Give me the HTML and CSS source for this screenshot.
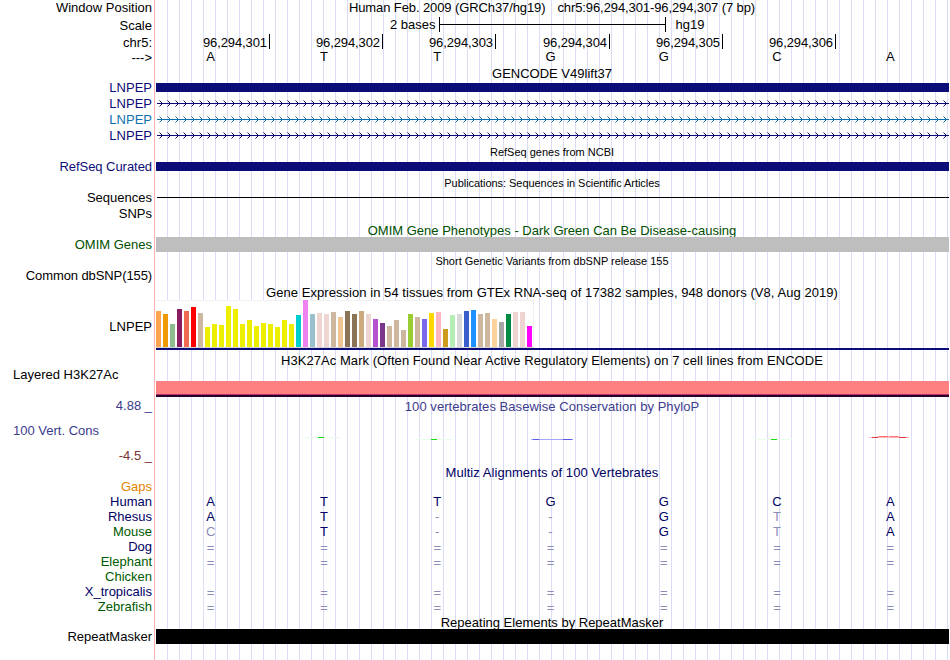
FILE: index.html
```html
<!DOCTYPE html>
<html lang="en">
<head>
<meta charset="utf-8">
<title>LNPEP chr5:96,294,301-96,294,307</title>
<link rel="stylesheet" href="styles.css">
</head>
<body>
<main class="browser">
  <div class="row h16"><span class="label">Window Position</span><div class="title pos"><span>Human Feb. 2009 (GRCh37/hg19)</span><span>chr5:96,294,301-96,294,307 (7 bp)</span></div></div>
  <div class="row h18"><span class="label low">Scale</span><div class="scale"><span>2 bases</span><i class="ruler"></i><span>hg19</span></div></div>
  <div class="row h16"><span class="label low">chr5:</span><div class="coords"><span>96,294,301</span><span>96,294,302</span><span>96,294,303</span><span>96,294,304</span><span>96,294,305</span><span>96,294,306</span></div></div>
  <div class="row h16"><span class="label">---&gt;</span><div class="bases top" data-bases="ATTGGCA"></div></div>
  <div class="row h16"><span></span><div class="title">GENCODE V49lift37</div></div>
  <div class="row h14 navy"><span class="label high">LNPEP</span><div class="bar exon"></div></div>
  <div class="row h16 navy"><span class="label">LNPEP</span><div class="intron"></div></div>
  <div class="row h16 blue"><span class="label">LNPEP</span><div class="intron"></div></div>
  <div class="row h16 navy"><span class="label">LNPEP</span><div class="intron"></div></div>
  <div class="row h16"><span></span><div class="title small">RefSeq genes from NCBI</div></div>
  <div class="row h15 navy"><span class="label high tight">RefSeq Curated</span><div class="bar exon curated"></div></div>
  <div class="row h16"><span></span><div class="title small tight">Publications: Sequences in Scientific Articles</div></div>
  <div class="row h15"><span class="label high">Sequences</span><div class="seqline"></div></div>
  <div class="row h16"><span class="label">SNPs</span></div>
  <div class="row h15 green"><span></span><div class="title low">OMIM Gene Phenotypes - Dark Green Can Be Disease-causing</div></div>
  <div class="row h15 green"><span class="label">OMIM Genes</span><div class="bar grey"></div></div>
  <div class="row h17"><span></span><div class="title small low">Short Genetic Variants from dbSNP release 155</div></div>
  <div class="row h15"><span class="label high tighter">Common dbSNP(155)</span></div>
  <div class="row h16"><span></span><div class="title low wide">Gene Expression in 54 tissues from GTEx RNA-seq of 17382 samples, 948 donors (V8, Aug 2019)</div></div>
  <div class="row gtex-row"><span class="label">LNPEP</span><div class="gtex"><div class="chart" id="chart"></div></div></div>
  <div class="row h18"><span></span><div class="title lower wide">H3K27Ac Mark (Often Found Near Active Regulatory Elements) on 7 cell lines from ENCODE</div></div>
  <div class="row h3k"><span class="label left">Layered H3K27Ac</span><div class="signal"></div></div>
  <div class="row phylop">
    <div class="axis"><span class="max">4.88 _</span><span class="name">100 Vert. Cons</span><span class="min">-4.5 _</span></div>
    <div>
      <div class="title wide">100 vertebrates Basewise Conservation by PhyloP</div>
      <svg class="wiggle" width="793" height="46" viewBox="156 416 793 46" shape-rendering="crispEdges">
        <g fill="#e9fbe9"><path d="M302 437h38v1h-38zM415 439h38v1h-38zM755 439h37v1h-37z"/></g>
        <g fill="#10e010"><path d="M318 437h6v1h-6zM431 439h6v1h-6zM771 439h6v1h-6z"/></g>
        <path fill="#a5a5fa" d="M531 439h42v1h-42z"/><path fill="#5a5ae8" d="M533 439h6v1h-6zM563 439h9v1h-9z"/>
        <path fill="#ffb5b5" d="M869 437h40v1h-40zM877 436h23v1h-23z"/><path fill="#ff7070" d="M879 436h9v1h-9zM890 436h8v1h-8z"/><path fill="#e03838" d="M872 437h6v1h-6zM899 437h7v1h-7z"/>
      </svg>
    </div>
  </div>
  <div class="row h17 deep"><span></span><div class="title lower wide">Multiz Alignments of 100 Vertebrates</div></div>
  <div class="row h15 orange"><span class="label">Gaps</span></div>
  <div class="row h15 deep"><span class="label">Human</span><div class="bases" data-bases="ATTGGCA"></div></div>
  <div class="row h15 deep"><span class="label">Rhesus</span><div class="bases" data-bases="AT--GtA"></div></div>
  <div class="row h15 forest"><span class="label">Mouse</span><div class="bases" data-bases="cT--GtA"></div></div>
  <div class="row h15 deep"><span class="label">Dog</span><div class="bases low" data-bases="======="></div></div>
  <div class="row h15 forest"><span class="label">Elephant</span><div class="bases low" data-bases="======="></div></div>
  <div class="row h15 forest"><span class="label">Chicken</span></div>
  <div class="row h15 deep"><span class="label">X_tropicalis</span><div class="bases low" data-bases="======="></div></div>
  <div class="row h15 forest"><span class="label">Zebrafish</span><div class="bases low" data-bases="======="></div></div>
  <div class="row h15"><span></span><div class="title low">Repeating Elements by RepeatMasker</div></div>
  <div class="row h15"><span class="label">RepeatMasker</span><div class="bar black"></div></div>
</main>
<script src="tracks.js"></script>
</body>
</html>
```
FILE: styles.css
```css
* { box-sizing: border-box; }
body { margin: 0; background: #fff; }
.browser {
  width: 950px; height: 660px; overflow: hidden;
  font: 13px/16px "Liberation Sans", Arial, sans-serif; color: #000;
  background:
    linear-gradient(#ffb4b4, #ffb4b4) 154px 0 / 1px 100% no-repeat,
    repeating-linear-gradient(90deg, #dcdcf7 0 1px, transparent 1px 12px) 167px 0 / 783px 100% no-repeat;
}
.row { display: grid; grid-template-columns: 156px 793px; grid-template-rows: 100%; height: 16px; white-space: nowrap; }
.h14 { height: 14px; line-height: 14px; }
.h15 { height: 15px; line-height: 15px; }
.h16 { height: 16px; }
.h17 { height: 17px; line-height: 17px; }
.h18 { height: 18px; line-height: 18px; }
.label { text-align: right; padding-right: 4px; }
.label.left { text-align: left; padding-left: 13px; }
.title { text-align: center; padding-right: 1px; }
.low { padding-top: 1px; }
.lower { padding-top: 2px; }
.high { margin-top: -1px; }
.small { font-size: 11px; }
.wide { letter-spacing: 0.05px; }
.tight { letter-spacing: -0.05px; }
.tighter { letter-spacing: -0.1px; }
.navy { color: #0c0c78; }
.blue { color: #1070ae; }
.green { color: #005000; }
.deep { color: #000064; }
.forest { color: #005a00; }
.orange { color: #e68200; }
.pos { display: flex; justify-content: center; gap: 12px; letter-spacing: -0.1px; }
.scale { display: flex; align-items: flex-start; padding-left: 234px; gap: 3px; }
.ruler { width: 227px; height: 15px; margin: 1px 7px 0 0; border: solid #000; border-width: 0 1px; background: linear-gradient(#000, #000) 0 7px / 100% 1px no-repeat; }
.coords { display: grid; grid-template-columns: 113px 113px 113px 114px 113px 113px; padding-left: 1px; letter-spacing: -0.1px; }
.coords span { border-right: 1px solid #000; height: 15px; line-height: 18px; text-align: right; padding-right: 2px; }
.bases { display: grid; grid-template-columns: repeat(7, 1fr); text-align: center; margin: 0 2px 0 -2px; color: #000064; }
.bases.top { color: #000; margin-top: -1px; }
.faint { color: #8c8cb8; }
.exon { height: 9px; background: #0c0c78; margin-top: 1px; }
.exon.curated { margin-top: 2px; }
.grey { background: #bebebe; }
.black { background: #000; }
.intron { margin-left: 1px; }
.intron svg { display: block; }
.seqline { height: 1px; background: #000; margin: 6px 0 0 1px; }
.gtex-row { height: 50px; line-height: 54px; }
.gtex { border-bottom: 2px solid #0c0c78; }
.chart { display: flex; align-items: flex-end; gap: 2px; width: 378px; height: 48px; background: #fff; box-shadow: inset -1px 1px #f0f0f0; border-bottom: 1px solid #d4d4d4; }
.chart i { width: 5px; flex: none; }
.h3k { height: 29px; line-height: 13px; }
.signal { height: 16px; margin-top: 13px; background: linear-gradient(#ff8080 0 13px, #b83068 13px 14px, #28002c 14px); }
.phylop { height: 65px; color: #3c3c8c; }
.phylop .title { height: 19px; line-height: 20px; }
.wiggle { display: block; }
.axis { display: flex; flex-direction: column; padding: 1px 4px 0 0; text-align: right; }
.axis .name { text-align: left; padding-left: 13px; margin: 9px 0; }
.axis .min { color: #783232; }
```
FILE: tracks.js
```js
const heights = [36,33,23,38,36,40,34,20,23,22,41,38,23,27,21,24,23,20,27,23,32,47,33,34,33,35,30,36,33,36,33,28,24,21,27,17,33,30,28,34,35,18,32,33,36,37,33,34,28,25,33,35,35,21];
const colors = ['#ffa54f','#ee9a00','#8fbc8f','#8b1c62','#ee6a50','#ff0000','#cdb79e',
  ...Array(13).fill('#eeee00'),
  '#00cdcd','#ee82ee','#9ac0cd','#eed5d2','#eed5d2','#cdb79e','#eec591','#8b7355','#8b7355','#cdaa7d','#eed5d2','#b452cd','#7a378b','#cdb79e','#cdb79e','#cdb79e','#9acd32','#cdb79e','#7a67ee','#ffd700','#ffb6c1','#cd9b1d','#b4eeb4','#d9d9d9','#3a5fcd','#1e90ff','#cdb79e','#cdb79e','#ffd39b','#a6a6a6','#008b45','#eed5d2','#eed5d2','#ff00ff'];
const chart = document.getElementById('chart');
heights.forEach((h, i) => {
  const bar = document.createElement('i');
  bar.style.height = h + 'px';
  bar.style.background = colors[i];
  chart.append(bar);
});

for (const el of document.querySelectorAll('.bases')) {
  for (const c of el.dataset.bases) {
    const cell = document.createElement('span');
    cell.textContent = c.toUpperCase();
    // lower case and gap symbols mark a mismatch with the reference genome
    if (!/[A-Z]/.test(c)) cell.className = 'faint';
    el.append(cell);
  }
}

let arrows = '', ends = '';
for (let x = 2; x < 790; x += 8) {
  ends += `M${x} 4h1v1h-1zM${x} 10h1v1h-1z`;
  arrows += `M${x + 1} 5h1v1h-1zM${x + 2} 6h1v1h-1zM${x + 2} 8h1v1h-1zM${x + 1} 9h1v1h-1z`;
}
for (const el of document.querySelectorAll('.intron')) {
  el.innerHTML = `<svg width="792" height="16" shape-rendering="crispEdges" fill="currentColor"><path d="M0 7h792v1H0z"/><path d="${arrows}"/><path opacity=".5" d="${ends}"/></svg>`;
}
```
